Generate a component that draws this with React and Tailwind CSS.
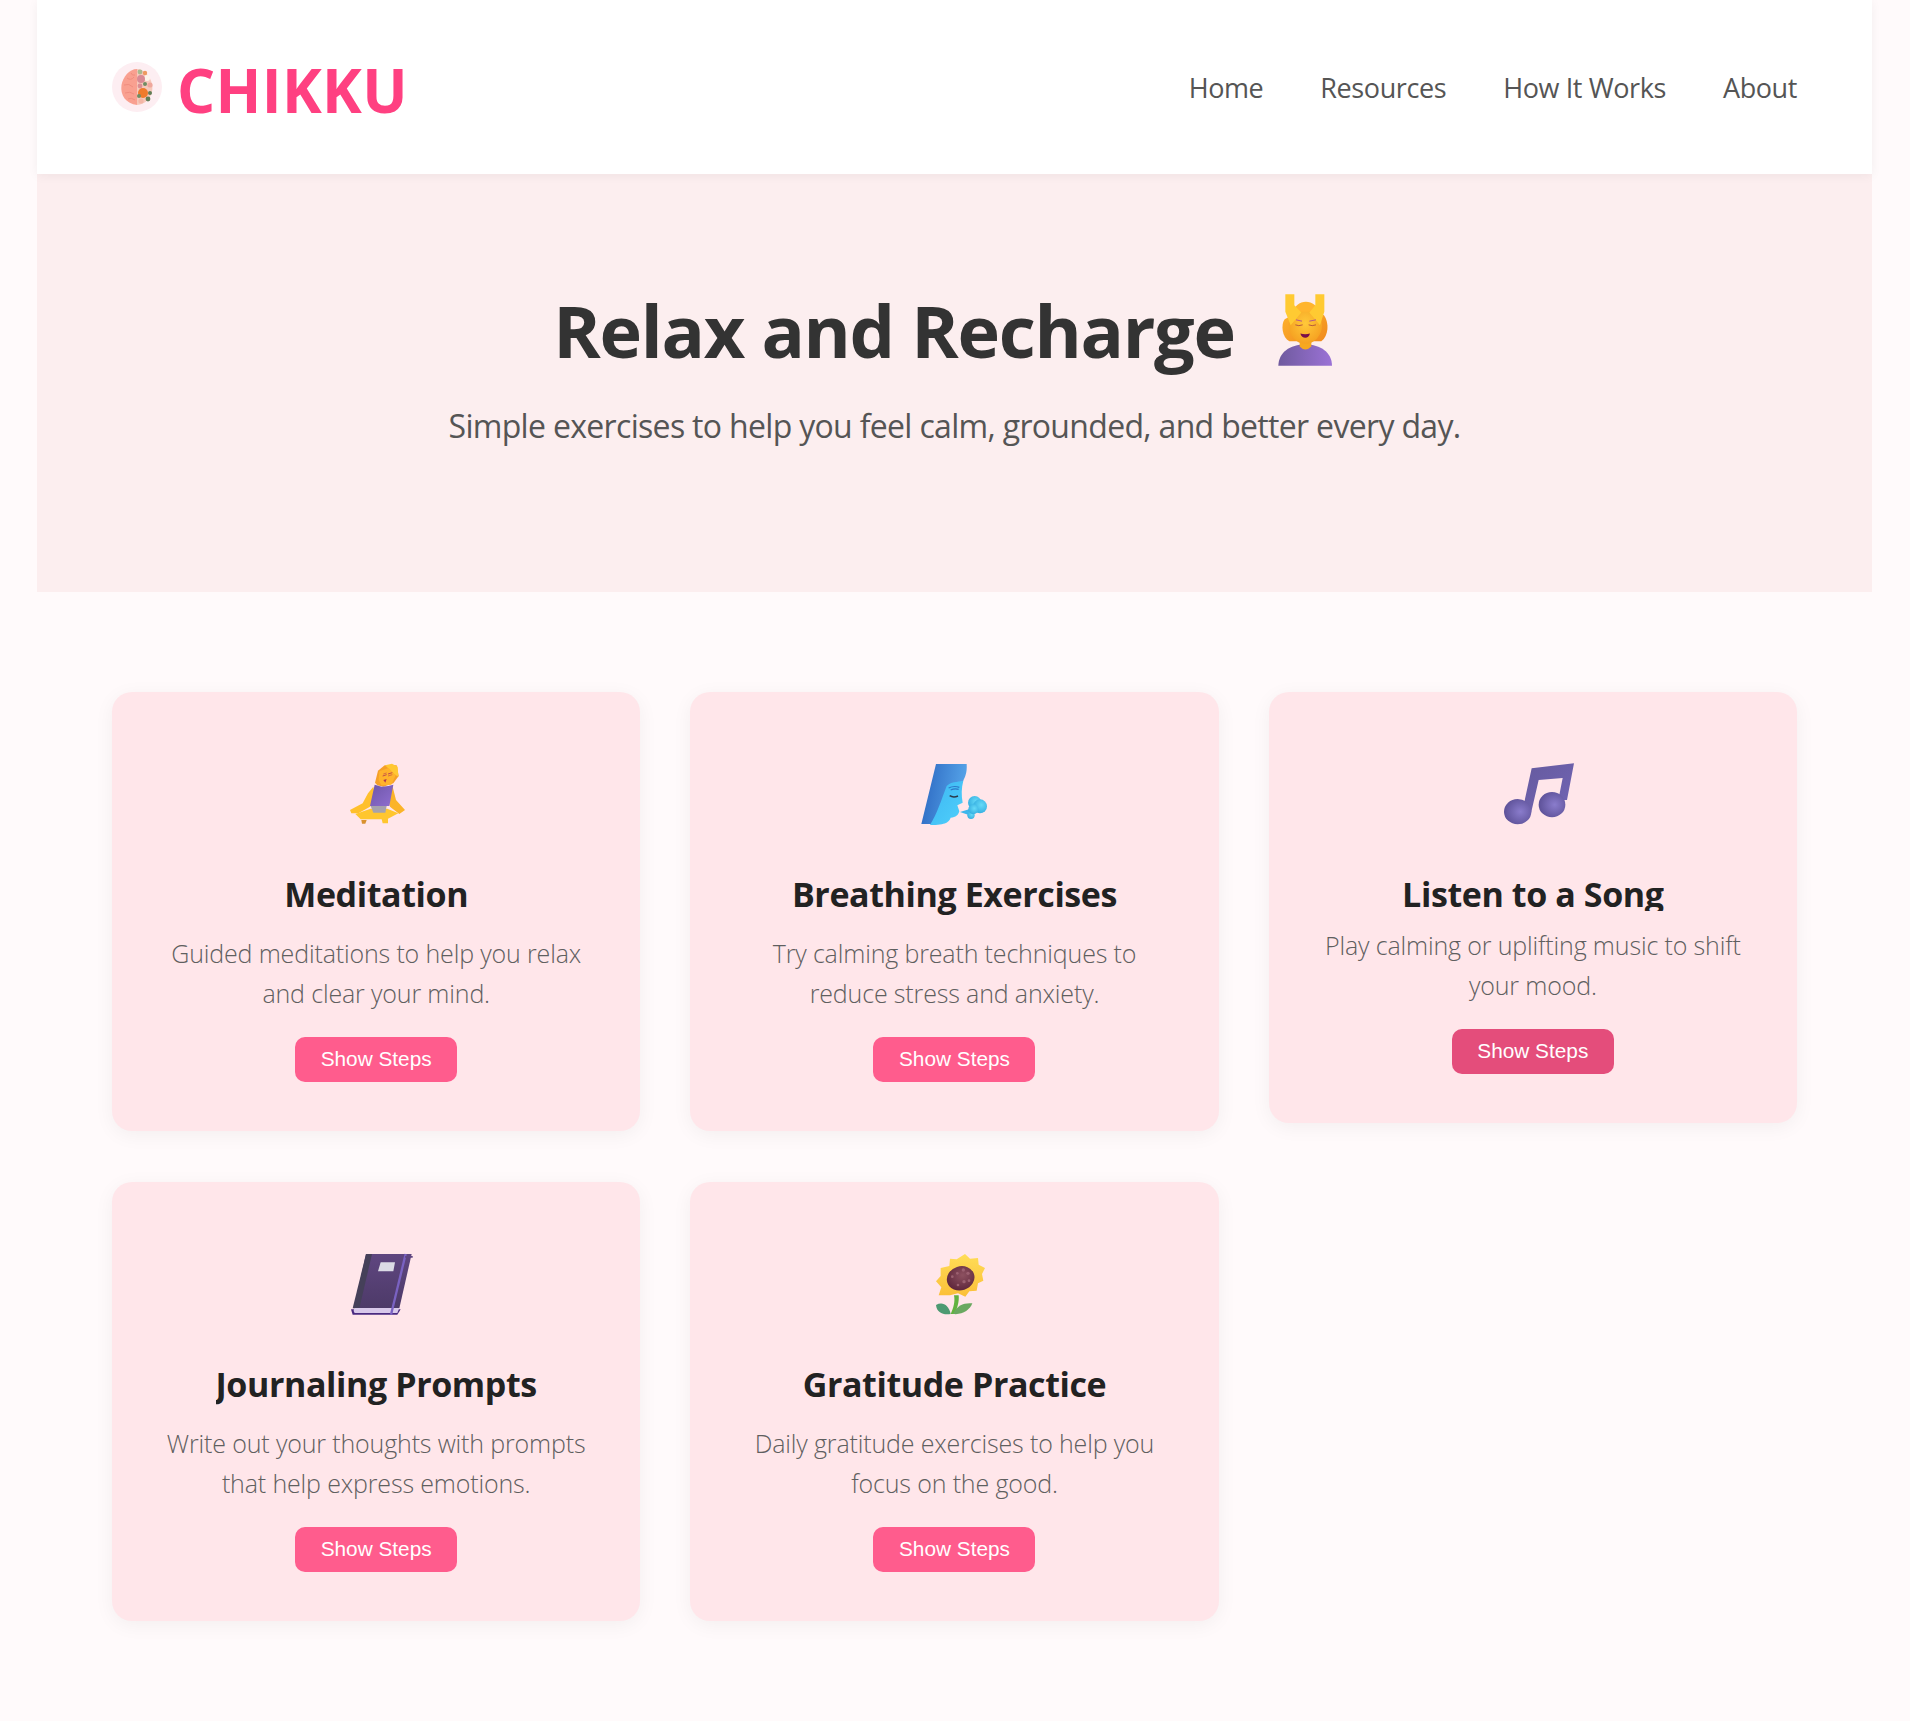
const fontStyle = "font-['Open_Sans','Noto_Sans',sans-serif]";

function BrainLogo() {
    return (
        <div className="flex h-[50px] w-[50px] shrink-0 items-center justify-center rounded-full bg-[#fdeef2]">
            <svg width="34" height="40" viewBox="0 0 34 40" aria-hidden="true">
                <path d="M17 2 C9 2 3 10 1.5 18 C0 28 6 37 17 38 Z" fill="#f9a090" />
                <path d="M7 11 Q11 14 14 10 M4 18 Q9 16 13 20 M5 26 Q10 24 14 27 M8 32 Q11 30 15 33 M11 6 Q12 9 15 8" stroke="#ee8b7d" strokeWidth="0.9" fill="none" />
                <path d="M17 2 C24 2 30 9 32 17 C34 27 28 37 17 38 Z" fill="#f6c8bb" />
                <circle cx="20" cy="5" r="2.4" fill="#a9b98f" />
                <circle cx="25" cy="6" r="2.2" fill="#ee9a5f" />
                <circle cx="27" cy="11" r="3" fill="#fdf3ea" />
                <circle cx="21" cy="12" r="4" fill="#d98a94" />
                <circle cx="30" cy="18" r="2.6" fill="#efa79c" />
                <circle cx="20" cy="19" r="2.4" fill="#dc8d92" />
                <circle cx="25" cy="17" r="2" fill="#6f8c63" />
                <circle cx="23" cy="26" r="5" fill="#ee7b2c" />
                <circle cx="30" cy="26" r="2" fill="#5f7d55" />
                <circle cx="19" cy="29" r="2" fill="#6f8c63" />
                <circle cx="28" cy="32" r="2.4" fill="#5f7d55" />
                <circle cx="21" cy="34" r="2.6" fill="#f3b6a6" />
            </svg>
        </div>
    );
}

function MassageIcon() {
    return (
        <svg width="54" height="72" viewBox="170 75 162 215" aria-hidden="true">
            <defs>
                <linearGradient id="mHair" x1="0" y1="0" x2="1" y2="1">
                    <stop offset="0" stopColor="#ffb52e" />
                    <stop offset="1" stopColor="#f08a1d" />
                </linearGradient>
                <linearGradient id="mShirt" x1="0" y1="0" x2="1" y2="0">
                    <stop offset="0" stopColor="#6f5a9e" />
                    <stop offset="1" stopColor="#9b72d6" />
                </linearGradient>
                <radialGradient id="mFace" cx="0.5" cy="0.45" r="0.6">
                    <stop offset="0" stopColor="#ffc93a" />
                    <stop offset="1" stopColor="#f59e1f" />
                </radialGradient>
            </defs>
            <path d="M171 290 C172 250 205 226 252 226 C298 226 332 250 332 290 Z" fill="url(#mShirt)" />
            <path d="M235 212 H270 V232 Q252 250 235 232 Z" fill="#f7a81f" />
            <path d="M190 150 C178 165 182 205 204 216 L300 216 C322 200 324 160 308 138 L250 118 Z" fill="url(#mHair)" />
            <ellipse cx="252" cy="168" rx="50" ry="56" fill="url(#mFace)" />
            <path d="M212 135 C222 86 284 84 296 135 L270 128 L235 128 Z" fill="#ffb52e" />
            <path d="M192 75 H219 V108 L240 130 L208 168 L192 128 Z" fill="#ffca32" />
            <path d="M282 75 H309 V128 L296 168 L264 130 L282 108 Z" fill="#ffca32" />
            <path d="M222 167 Q232 172 244 167 M262 167 Q272 172 284 167" stroke="#b85a3a" strokeWidth="3" fill="none" />
            <path d="M224 152 L242 156 M264 156 L284 152" stroke="#b4578c" strokeWidth="3" fill="none" />
            <path d="M237 193 Q252 197 266 193 Q262 206 252 206 Q241 206 237 193 Z" fill="#7a0f4a" />
        </svg>
    );
}

function MeditationIcon() {
    return (
        <svg width="100" height="90" viewBox="-12 0 300 270" aria-hidden="true">
            <defs>
                <linearGradient id="pTop" x1="0" y1="0" x2="1" y2="1">
                    <stop offset="0" stopColor="#6e56a8" />
                    <stop offset="1" stopColor="#8f6ed0" />
                </linearGradient>
            </defs>
            <path d="M135 98 L144 62 L164 46 L200 46 L206 78 L190 100 L160 110 L142 106 Z" fill="#f5a028" />
            <path d="M165 46 L186 41 L203 50 L205 80 L192 72 L178 58 Z" fill="#ffc832" />
            <path d="M148 64 L176 54 L197 76 L184 104 L154 106 L146 90 Z" fill="#ffb32b" />
            <path d="M158 78 L170 74 M174 72 L187 68" stroke="#c24c4a" strokeWidth="3" />
            <path d="M160 72 L170 69 M174 78 L187 74" stroke="#c24c4a" strokeWidth="2" />
            <path d="M160 90 L170 87 L166 98 Z" fill="#b03a4a" />
            <path d="M130 110 L138 150 L120 170 L85 190 L64 190 L60 180 L98 160 L114 130 Z" fill="#ffc02c" />
            <path d="M188 110 L198 150 L225 180 L208 192 L180 170 L170 130 Z" fill="#fbb428" />
            <path d="M76 192 L122 176 H172 L205 190 L174 206 L174 220 H158 L155 208 H92 Z" fill="#ffc62e" />
            <path d="M94 210 H110 L106 221 H96 Z" fill="#d9912f" />
            <path d="M134 104 L155 110 L175 108 L190 104 L178 168 H120 Z" fill="url(#pTop)" />
            <path d="M122 168 H170 L166 188 H130 Z" fill="#a6a2ad" />
        </svg>
    );
}

function BreathIcon() {
    return (
        <svg width="100" height="90" viewBox="0 0 300 270" aria-hidden="true">
            <defs>
                <linearGradient id="bHair" x1="0" y1="0" x2="1" y2="0.2">
                    <stop offset="0" stopColor="#2b66c0" />
                    <stop offset="1" stopColor="#55a3e8" />
                </linearGradient>
                <linearGradient id="bFace" x1="0" y1="0" x2="1" y2="1">
                    <stop offset="0" stopColor="#3db6f2" />
                    <stop offset="1" stopColor="#4fd0fb" />
                </linearGradient>
                <radialGradient id="bPuff" cx="0.6" cy="0.4" r="0.7">
                    <stop offset="0" stopColor="#66daf8" />
                    <stop offset="1" stopColor="#2fa9de" />
                </radialGradient>
            </defs>
            <path d="M96 42 H188 C190 70 182 82 178 92 L140 115 L110 222 H52 Z" fill="url(#bHair)" />
            <path d="M178 92 C172 115 172 135 176 158 L160 166 L166 184 C162 196 156 202 140 203 C135 215 128 225 78 225 C100 190 112 150 128 108 C140 95 160 96 178 92 Z" fill="url(#bFace)" />
            <path d="M134 114 Q150 106 166 112 M140 120 Q152 114 164 118" stroke="#2d78c8" strokeWidth="3.5" fill="none" />
            <path d="M137 137 Q148 144 162 138" stroke="#2b3a4a" strokeWidth="4.5" fill="none" />
            <path d="M168 186 L200 176 L192 194 Z" fill="#3db6ec" />
            <circle cx="212" cy="158" r="20" fill="url(#bPuff)" />
            <circle cx="228" cy="169" r="21" fill="url(#bPuff)" />
            <circle cx="201" cy="196" r="11" fill="url(#bPuff)" />
            <circle cx="208" cy="178" r="15" fill="url(#bPuff)" />
        </svg>
    );
}

function MusicIcon() {
    return (
        <svg width="100" height="90" viewBox="-21 0 300 270" aria-hidden="true">
            <defs>
                <radialGradient id="nBall" cx="0.6" cy="0.5" r="0.6">
                    <stop offset="0" stopColor="#8a7ccc" />
                    <stop offset="1" stopColor="#5d5198" />
                </radialGradient>
                <linearGradient id="nStem" x1="0" y1="0" x2="1" y2="1">
                    <stop offset="0" stopColor="#655a9e" />
                    <stop offset="1" stopColor="#7265b5" />
                </linearGradient>
            </defs>
            <path d="M125 55 L252 40 L231 150 L205 150 L218 84 L146 90 L123 190 L100 170 Z" fill="url(#nStem)" />
            <ellipse cx="83" cy="185" rx="41" ry="38" fill="url(#nBall)" />
            <ellipse cx="186" cy="164" rx="40" ry="38" fill="url(#nBall)" />
        </svg>
    );
}

function BookIcon() {
    return (
        <svg width="100" height="90" viewBox="-42 0 300 270" aria-hidden="true">
            <defs>
                <linearGradient id="kCover" x1="0" y1="0" x2="0" y2="1">
                    <stop offset="0" stopColor="#5f4680" />
                    <stop offset="1" stopColor="#4d3a68" />
                </linearGradient>
            </defs>
            <path d="M78 42 H215 L178 205 H42 Z" fill="url(#kCover)" />
            <path d="M78 42 H96 L58 205 H38 Z" fill="#454059" />
            <path d="M33 208 H182 L172 224 H38 Z" fill="#4a2a80" />
            <path d="M44 204 H178 L172 219 H44 Q38 212 44 204 Z" fill="#d8c8ea" />
            <path d="M122 67 H165 L160 94 H114 Z" fill="#dcdbe6" />
            <path d="M197 42 L153 224" stroke="#7a62c2" strokeWidth="7" fill="none" />
            <path d="M196 48 H218 V53 H195 Z" fill="#5f4680" />
        </svg>
    );
}

function SunflowerIcon() {
    return (
        <svg width="100" height="90" viewBox="-30 0 300 270" aria-hidden="true">
            <defs>
                <linearGradient id="fPetal" x1="0" y1="0" x2="0" y2="1">
                    <stop offset="0" stopColor="#ffdd57" />
                    <stop offset="1" stopColor="#fbbf38" />
                </linearGradient>
                <radialGradient id="fSeed" cx="0.6" cy="0.4" r="0.7">
                    <stop offset="0" stopColor="#8d5160" />
                    <stop offset="1" stopColor="#5a2238" />
                </radialGradient>
            </defs>
            <path d="M120 166 C124 185 118 205 110 222 L122 222 C130 205 136 185 134 166 Z" fill="#62b23f" />
            <path d="M66 195 C85 184 104 194 110 222 C88 226 68 218 66 195 Z" fill="#4d9a72" />
            <path d="M118 220 C130 195 150 188 175 190 C168 210 145 225 118 222 Z" fill="#6aa860" />
            <path d="M108 56 L128 58 L153 42 L168 56 L192 54 L194 74 L213 84 L204 102 L208 122 L192 130 L188 152 L166 154 L154 170 L132 160 L108 166 L74 166 L82 142 L66 124 L80 108 L80 84 L106 78 Z" fill="url(#fPetal)" />
            <ellipse cx="140" cy="115" rx="42" ry="36" transform="rotate(-18 140 115)" fill="url(#fSeed)" />
            <g fill="#9b6070">
                <circle cx="115" cy="110" r="4" />
                <circle cx="130" cy="100" r="4" />
                <circle cx="148" cy="90" r="5" />
                <circle cx="162" cy="100" r="5" />
                <circle cx="150" cy="125" r="5" />
                <circle cx="132" cy="135" r="4" />
                <circle cx="165" cy="122" r="4" />
            </g>
        </svg>
    );
}

const practices = [
    { title: 'Meditation', text: ['Guided meditations to help you relax', 'and clear your mind.'], icon: <MeditationIcon /> },
    { title: 'Breathing Exercises', text: ['Try calming breath techniques to', 'reduce stress and anxiety.'], icon: <BreathIcon /> },
    { title: 'Listen to a Song', text: ['Play calming or uplifting music to shift', 'your mood.'], icon: <MusicIcon />, hovered: true },
    { title: 'Journaling Prompts', text: ['Write out your thoughts with prompts', 'that help express emotions.'], icon: <BookIcon /> },
    { title: 'Gratitude Practice', text: ['Daily gratitude exercises to help you', 'focus on the good.'], icon: <SunflowerIcon /> },
];

function PracticeCard({ practice }) {
    const { title, text, icon, hovered } = practice;
    return (
        <div className="flex flex-col items-center rounded-[20px] bg-[#ffe6ea] px-[20px] pt-[58px] pb-[49px] text-center shadow-[0_4px_20px_rgba(0,0,0,0.05)]">
            <div className="h-[90px] w-[100px]">{icon}</div>
            <h3 className={hovered
                ? "mt-[32px] h-[39px] overflow-hidden text-[34px] leading-[45px] font-bold tracking-[-0.4px] text-[#222]"
                : "mt-[32px] h-[47px] overflow-hidden text-[34px] leading-[45px] font-bold tracking-[-0.4px] text-[#222]"}>
                {title}
            </h3>
            <p className="mt-[15px] text-[25px] leading-[39.5px] font-light tracking-[-0.15px] text-[#5f5f5f]">
                {text[0]}
                <br />
                {text[1]}
            </p>
            <button
                type="button"
                className={hovered
                    ? "mt-[24px] h-[45px] w-[162px] rounded-[10px] bg-[#e44d7b] pb-[2px] font-['Liberation_Sans',sans-serif] text-[20.8px] text-white"
                    : "mt-[24px] h-[45px] w-[162px] rounded-[10px] bg-[#ff5c8d] pb-[2px] font-['Liberation_Sans',sans-serif] text-[20.8px] text-white"}
            >
                Show Steps
            </button>
        </div>
    );
}

export default function App() {
    const navItems = ['Home', 'Resources', 'How It Works', 'About'];

    return (
        <div className={`min-h-[1721px] bg-[#fffafb] pr-[38px] pb-[100px] pl-[37px] ${fontStyle}`}>
            <header className="relative z-10 flex h-[174px] items-center justify-between bg-white px-[75px] shadow-[0_2px_10px_rgba(0,0,0,0.05)]">
                <div className="flex items-center gap-[15px]">
                    <BrainLogo />
                    <span className="pt-[5px] text-[60px] leading-none font-bold tracking-[0.3px] text-[#ff4081]">CHIKKU</span>
                </div>
                <nav className="flex items-center gap-[57px] pt-[3px]">
                    {navItems.map((item) => (
                        <a key={item} href="#" className="text-[27px] tracking-[-0.4px] text-[#555]">{item}</a>
                    ))}
                </nav>
            </header>

            <section className="flex h-[418px] flex-col items-center bg-[#fceeef] pt-[112px]">
                <h1 className="flex items-center gap-[43px] pr-[24px] text-[72px] leading-[88px] font-bold tracking-[-1.3px] text-[#333]">
                    <span>Relax and Recharge</span>
                    <MassageIcon />
                </h1>
                <p className="mt-[29px] text-[32px] leading-[45px] tracking-[-0.68px] text-[#555]">
                    Simple exercises to help you feel calm, grounded, and better every day.
                </p>
            </section>

            <main className="grid grid-cols-3 items-start gap-x-[50px] gap-y-[51px] px-[75px] pt-[100px]">
                {practices.map((practice) => (
                    <PracticeCard key={practice.title} practice={practice} />
                ))}
            </main>
        </div>
    );
}
